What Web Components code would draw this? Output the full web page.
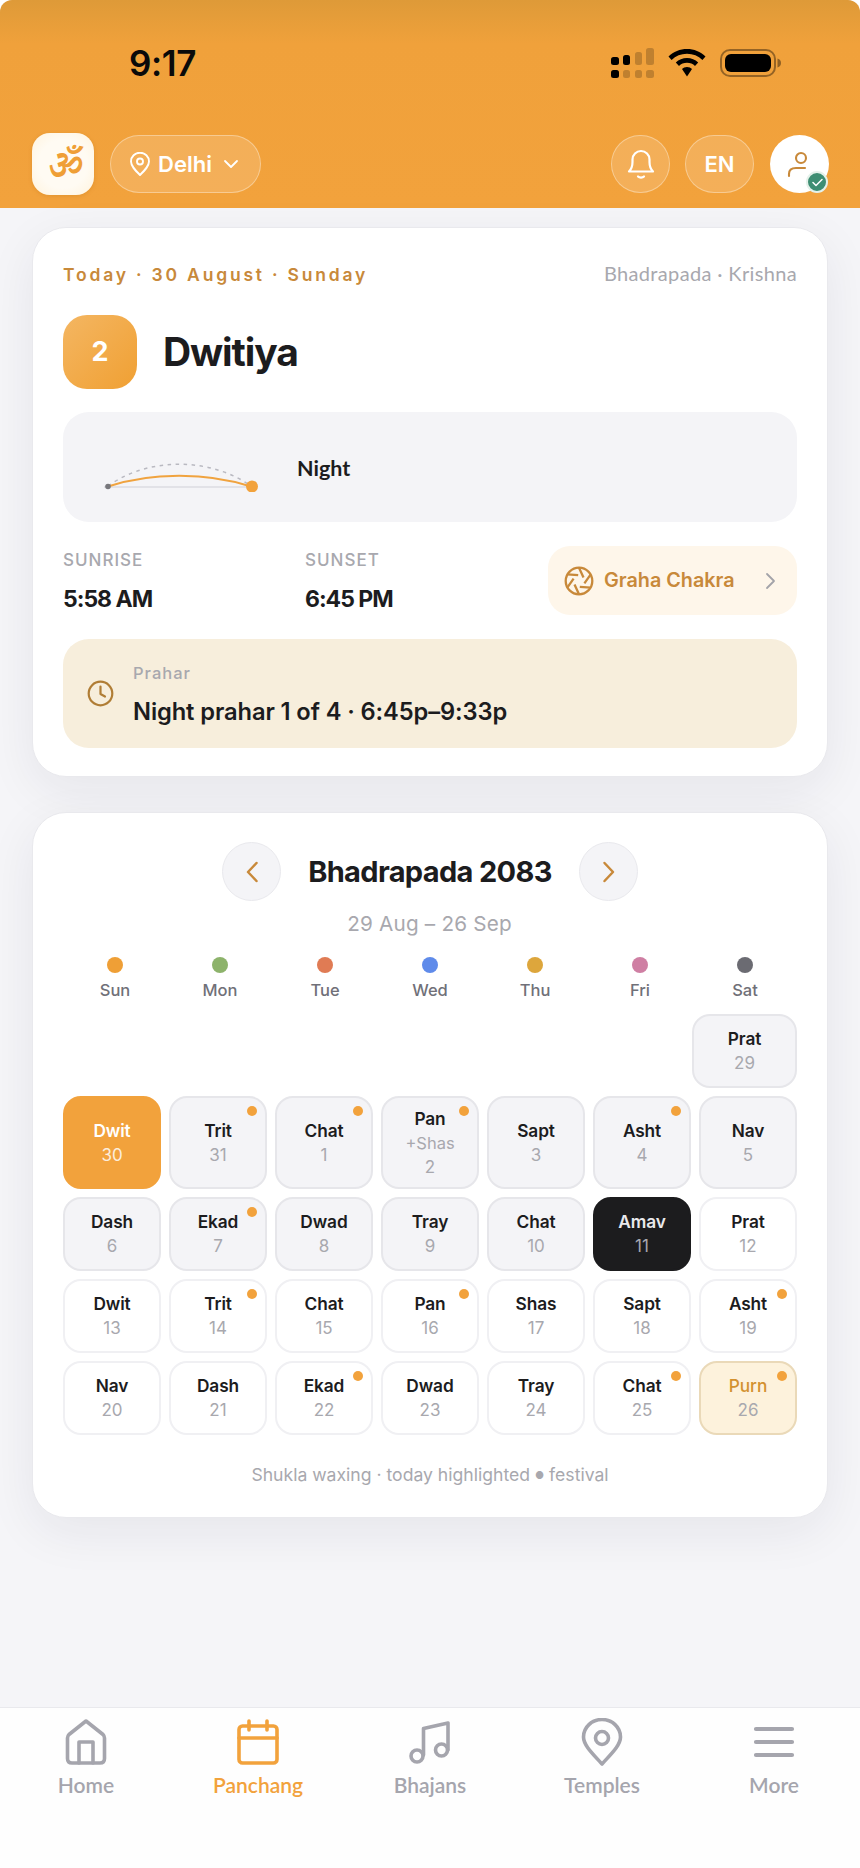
<!DOCTYPE html>
<html lang="en"><head><meta charset="utf-8"><title>Panchang</title>
<style>
html{background:#fff}
body{margin:0;font-family:Inter,"Noto Sans",sans-serif;color:#1c1c1e}
</style></head><body>
<app-shell>
  <top-header slot="top"></top-header>
  <tithi-card></tithi-card>
  <month-card></month-card>
  <bottom-nav slot="nav"></bottom-nav>
</app-shell>
<script>
const def=(name,html,init)=>customElements.define(name,class extends HTMLElement{
  constructor(){super();this.attachShadow({mode:'open'}).innerHTML=typeof html==='function'?html(this):html;}
  connectedCallback(){init&&init(this)}
});
const F='Inter,"Noto Sans",sans-serif';
const L='Lato,"Noto Sans",sans-serif';

def('app-shell',`<style>
:host{display:flex;flex-direction:column;height:1868px;overflow:hidden;background:#f5f5f8;border-radius:12px 12px 0 0}
main{flex:1;display:flex;flex-direction:column;gap:35px;padding:19px 32px 0;min-height:0}
</style><slot name="top"></slot><main><slot></slot></main><slot name="nav"></slot>`);

def('status-bar',`<style>
:host{display:flex;align-items:center;justify-content:space-between;height:133px;box-sizing:border-box;padding:0 79px 8px 129px}
.t{font:600 35px/1 ${F};color:#0a0a0a;letter-spacing:-.4px;position:relative;top:1px}
.r{display:flex;align-items:center;gap:14px}
svg{display:block}
</style>
<span class="t">9:17</span>
<span class="r">
<svg width="43" height="30" viewBox="0 0 43 30"><g fill="#000"><rect x="0" y="9" width="8" height="8" rx="2.500"/><rect x="0" y="22" width="8" height="8" rx="2.500"/><rect x="12" y="7" width="7" height="10" rx="2.500"/></g><g fill="#000" opacity=".2"><rect x="12" y="22" width="7" height="8" rx="2.500"/><rect x="24" y="4" width="7" height="13" rx="2.500"/><rect x="24" y="22" width="7" height="8" rx="2.500"/><rect x="35" y="0" width="8" height="17" rx="2.500"/><rect x="35" y="22" width="8" height="8" rx="2.500"/></g></svg>
<svg width="38" height="28" viewBox="0 0 38 28"><path d="M19 0C12 0 5.500 2.500.5 7.500L3.600 11C7.700 7 13 4.800 19 4.800S30.300 7 34.400 11L37.500 7.500C32.500 2.500 26 0 19 0Z"/><path d="M19 9C14.700 9 10.800 10.600 7.800 13.500L11 17C13 15 15.800 13.800 19 13.800S25 15 27 17L30.200 13.500C27.200 10.600 23.300 9 19 9Z"/><path d="M19 18C17 18 15.200 18.800 14 20L19 27.500 24 20C22.800 18.800 21 18 19 18Z"/></svg>
<svg width="61" height="28" viewBox="0 0 61 28"><rect x="1" y="1" width="54" height="26" rx="9" fill="none" stroke="#000" stroke-opacity=".38" stroke-width="2"/><rect x="5" y="5" width="46" height="18" rx="6"/><path d="M57.500 9.500C60 10 61 12 61 14S60 18 57.500 18.500Z" opacity=".4"/></svg>
</span>`);

def('glass-pill',`<style>
:host{display:inline-flex;align-items:center;justify-content:center;height:58px;box-sizing:border-box;border:1.500px solid rgba(255,255,255,.35);background:rgba(255,255,255,.15);border-radius:29px;color:#fff;font:600 22px/1 ${F}}
</style><slot></slot>`);

def('top-header',`<style>
:host{display:block;height:208px;flex:none;background:linear-gradient(#de9a38 0,#f0a13b 44px,#f2a23c 100%)}
.row{display:flex;align-items:center;padding:0 31px 0 32px;height:62px}
.logo{width:62px;height:62px;border-radius:18px;background:radial-gradient(circle,#fffbf3 55%,#fff3dd 100%);box-sizing:border-box;display:flex;align-items:center;justify-content:center;box-shadow:0 1px 4px rgba(160,90,0,.2)}
.logo span{font:700 38px/1 "Liberation Serif","Noto Serif Devanagari",serif;font-style:italic;color:#ef9f36}
.sp{flex:1}
.loc{width:151px;margin-left:16px;gap:7px;padding-right:3px}
.bell{width:59px;margin-right:15px}
.en{width:69px;margin-right:16px}
.av{width:59px;height:58px;border-radius:50%;background:#fff;position:relative;display:flex;align-items:center;justify-content:center}
.ok{position:absolute;right:1px;bottom:0;width:22px;height:22px;box-sizing:border-box;border-radius:50%;background:#3e8e73;border:2.500px solid #e4f1ea;display:flex;align-items:center;justify-content:center}
svg{display:block}
</style>
<status-bar></status-bar>
<div class="row">
  <div class="logo"><span>ॐ</span></div>
  <glass-pill class="loc"><svg width="22" height="24" viewBox="0 0 22 24" fill="none" stroke="#fff" stroke-width="1.900"><path d="M11 23C6 18 2 14 2 9.500A9 8.800 0 0 1 20 9.500C20 14 16 18 11 23Z" stroke-linejoin="round"/><circle cx="11" cy="9.500" r="3"/></svg><span>Delhi</span><svg width="16" height="10" viewBox="0 0 16 10" fill="none" stroke="#fff" stroke-width="1.800" stroke-linecap="round" stroke-linejoin="round" style="margin-left:4px"><path d="M2 2l6 6 6-6"/></svg></glass-pill>
  <span class="sp"></span>
  <glass-pill class="bell"><svg width="28" height="31" viewBox="0 0 28 31" fill="none" stroke="#fff" stroke-width="2.200" stroke-linecap="round" stroke-linejoin="round"><path d="M2 22.500C4.500 20 5.500 18 5.500 13V10.500A8.500 8.500 0 0 1 22.500 10.500V13C22.500 18 23.500 20 26 22.500Z"/><path d="M11 27.500C12.500 29 15.500 29 17 27.500"/></svg></glass-pill>
  <glass-pill class="en">EN</glass-pill>
  <div class="av"><svg width="26" height="27" viewBox="0 0 26 27" fill="none" stroke="#c8893a" stroke-width="2.100" stroke-linecap="round"><circle cx="14" cy="7" r="5"/><path d="M2 25V23C2 19 5 17 9 17H18"/></svg><span class="ok"><svg width="11" height="9" viewBox="0 0 11 9" fill="none" stroke="#fff" stroke-width="1.500" stroke-linecap="round" stroke-linejoin="round"><path d="M1 4.500l3 3 6-6"/></svg></span></div>
</div>`);

def('card-box',`<style>
:host{display:block;background:#fff;border:1px solid #e9e9ed;border-radius:34px;padding:30px;box-shadow:0 14px 50px rgba(30,30,60,.07);box-sizing:border-box}
</style><slot></slot>`);

def('tithi-card',`<style>
:host{display:block}
card-box{padding-top:30px;padding-bottom:28px}
.top{display:flex;justify-content:space-between;align-items:center;height:22px;margin-top:6px}
.date{font:600 17.500px/22px ${F};letter-spacing:2.800px;color:#c8893a}
.paksha{font:400 20px/22px ${L};color:#a8a8ae;letter-spacing:.35px;margin-bottom:5px}
.tithi{display:flex;align-items:center;gap:26px;margin-top:29px}
.num{width:74px;height:74px;border-radius:24px;background:linear-gradient(135deg,#f4b662,#f0a033);color:#fff;font:700 27px/74px ${F};text-align:center}
h1{margin:-2px 0 0;font:700 39px/1 ${F};letter-spacing:-1.100px;color:#1c1c1e}
.sky{height:110px;margin-top:23px;border-radius:26px;background:#f4f4f7;display:flex;align-items:flex-start;position:relative}
.sky svg{display:block;margin:40px 0 0 25px;flex:none}
.sky b{font:700 21.500px/1 ${L};margin:46px 0 0 25px;color:#1c1c1e}
.sun{display:flex;align-items:center;margin-top:24px;height:69px}
.st{width:242px}
.st small{display:block;font:500 17px/20px ${F};letter-spacing:1px;color:#a8a8ae}
.st strong{display:block;margin-top:17px;font:700 23px/24px ${F};letter-spacing:-1px;color:#1c1c1e}
.gc{width:249px;height:69px;box-sizing:border-box;margin-left:auto;border-radius:22px;background:#fef6ea;display:flex;align-items:center;padding:0 21px 0 16px;color:#c8893a;font:600 19.800px/1 ${F}}
.gc svg:first-child{margin-right:10px}
.gc svg:last-child{margin-left:auto}
.pr{margin-top:24px;height:109px;border-radius:26px;background:#f7eedc;display:flex;align-items:center;padding-left:24px;gap:19px}
.pr span{margin-top:2px}
.pr small{display:block;font:500 16.500px/20px ${F};letter-spacing:1px;color:#a8a8ae;margin-top:-2px}
.pr div{font:600 23.700px/26px ${F};letter-spacing:-.1px;color:#1c1c1e;margin-top:16px}
svg{display:block}
</style>
<card-box>
<div class="top"><span class="date">Today · 30 August · Sunday</span><span class="paksha">Bhadrapada · Krishna</span></div>
<div class="tithi"><div class="num">2</div><h1>Dwitiya</h1></div>
<div class="sky"><svg width="184" height="40" viewBox="0 0 184 40" fill="none"><path d="M16 35H162" stroke="#dcdce2" stroke-width="1.500"/><path d="M20 34C60 5 122 5 163 34" stroke="#b9b9c1" stroke-width="1.500" stroke-dasharray="3.500 4.500"/><path d="M20 34.500C62 20 120 20 163 34.500" stroke="#f0a33f" stroke-width="2"/><circle cx="20" cy="34.500" r="2.800" fill="#77777c"/><circle cx="164" cy="34.500" r="6" fill="#f2a23c"/></svg><b>Night</b></div>
<div class="sun">
  <div class="st"><small>SUNRISE</small><strong>5:58 AM</strong></div>
  <div class="st" style="width:auto"><small>SUNSET</small><strong>6:45 PM</strong></div>
  <div class="gc"><svg width="30" height="30" viewBox="0 0 30 30" fill="none" stroke="#c8893a" stroke-width="2.300" stroke-linejoin="round"><circle cx="15" cy="15" r="13.300"/><path d="M15 1.700L19.500 11.500M26.700 8.300L20.400 17.300M26.700 21.700L15.800 20.800M15 28.300L10.500 18.500M3.300 21.700L9.600 12.700M3.300 8.300L14.200 9.200"/></svg><span>Graha Chakra</span><svg width="11" height="18" viewBox="0 0 11 18" fill="none" stroke="#a3a3a9" stroke-width="1.800" stroke-linecap="round" stroke-linejoin="round"><path d="M2 2l7 7-7 7"/></svg></div>
</div>
<div class="pr"><svg width="27" height="27" viewBox="0 0 27 27" fill="none" stroke="#b07d35" stroke-width="2.200" stroke-linecap="round" stroke-linejoin="round"><circle cx="13.500" cy="13.500" r="11.800"/><path d="M13.500 6.500V14L18 16.500"/></svg><span><small>Prahar</small><div>Night prahar 1 of 4 · 6:45p–9:33p</div></span></div>
</card-box>`);

def('day-cell',h=>`<style>
:host{display:flex;flex-direction:column;align-items:center;justify-content:center;box-sizing:border-box;min-height:74px;padding:8.500px 0;border:2px solid #f0f0f3;border-radius:18px;background:#fff;position:relative;text-align:center}
:host([past]){background:#f4f4f7;border-color:#e6e6ea}
:host([wide]){margin-left:-7px}
:host([today]){background:#f2a23c;border-color:#f2a23c}
:host([amav]){background:#1c1c1e;border-color:#1c1c1e}
:host([purn]){background:#fdf2dc;border-color:#ead9b8}
b{font:600 17.300px/24px ${F};color:#1c1c1e;letter-spacing:-.1px}
span{font:400 17px/24px ${F};color:#a8a8ae}
i{font:400 16.500px/24px ${F};color:#a8a8ae}
:host([today]) b{color:#fff}:host([today]) span{color:#fff;opacity:.82}
:host([amav]) b{color:#e9e9ec}:host([amav]) span{color:#a8a8ae}
:host([purn]) b{color:#d3912f;font-weight:500}
em{position:absolute;top:8px;right:8px;width:10px;height:10px;border-radius:50%;background:#f2a23c}
</style><b><slot></slot></b><i></i><span></span><em hidden></em>`,h=>{
 const s=h.shadowRoot;s.querySelector('span').textContent=h.getAttribute('n')||'';
 const i=s.querySelector('i');if(h.hasAttribute('sub'))i.textContent=h.getAttribute('sub');else i.remove();
 if(h.hasAttribute('fest'))s.querySelector('em').hidden=false;else s.querySelector('em').remove();
});

def('round-btn',`<style>
:host{display:flex;align-items:center;justify-content:center;width:59px;height:59px;border-radius:50%;background:#f4f4f7;border:1px solid #e9e9ed;box-sizing:border-box;flex:none}
</style><slot></slot>`);

const rows=[
 [29,'Prat','past wide'],
 [30,'Dwit','today'],[31,'Trit','past fest'],[1,'Chat','past fest'],[2,'Pan','past fest',"+Shas"],[3,'Sapt','past'],[4,'Asht','past fest'],[5,'Nav','past'],
 [6,'Dash','past'],[7,'Ekad','past fest'],[8,'Dwad','past'],[9,'Tray','past'],[10,'Chat','past'],[11,'Amav','amav'],[12,'Prat',''],
 [13,'Dwit',''],[14,'Trit','fest'],[15,'Chat',''],[16,'Pan','fest'],[17,'Shas',''],[18,'Sapt',''],[19,'Asht','fest'],
 [20,'Nav',''],[21,'Dash',''],[22,'Ekad','fest'],[23,'Dwad',''],[24,'Tray',''],[25,'Chat','fest'],[26,'Purn','purn fest']
];
const cells='<span></span>'.repeat(6)+rows.map(([n,t,f,sub])=>`<day-cell n="${n}" ${f} ${sub?`sub="${sub}"`:''}>${t}</day-cell>`).join('');
const days=[['Sun','#ef9f36'],['Mon','#8db36b'],['Tue','#e07b54'],['Wed','#5f8bea'],['Thu','#dda63c'],['Fri','#cf7fa3'],['Sat','#6b6b72']];

def('month-card',`<style>
:host{display:block}
.head{display:flex;justify-content:center;align-items:center;gap:27px}
h2{margin:0;font:700 29px/1 ${F};letter-spacing:-.65px;color:#1c1c1e;width:244px;text-align:center;white-space:nowrap}
.sub{text-align:center;font:400 20.700px/26px ${F};color:#a8a8ae;letter-spacing:.2px;margin:10px 1px 0 0}
.days{display:grid;grid-template-columns:repeat(7,105px);margin:20.400px -.5px 0;justify-items:center}
.d{display:flex;flex-direction:column;align-items:center;gap:7px;font:500 16.500px/20px ${F};color:#707078}
.d i{width:16px;height:16px;border-radius:50%}
.grid{display:grid;grid-template-columns:repeat(7,1fr);gap:8px;margin-top:14px}
.foot{margin-top:29px;text-align:center;font:400 17.600px/22px ${F};color:#a8a8ae;padding-bottom:1px}
.foot small{font-size:10px;position:relative;top:-2px}
card-box{padding-top:29px;height:706px}
svg{display:block}
</style>
<card-box>
<div class="head"><round-btn><svg width="14" height="22" viewBox="0 0 14 22" fill="none" stroke="#c8893a" stroke-width="2.500" stroke-linecap="round" stroke-linejoin="round"><path d="M11.500 2L3 11l8.500 9"/></svg></round-btn><h2>Bhadrapada 2083</h2><round-btn><svg width="14" height="22" viewBox="0 0 14 22" fill="none" stroke="#c8893a" stroke-width="2.500" stroke-linecap="round" stroke-linejoin="round"><path d="M2.500 2L11 11l-8.500 9"/></svg></round-btn></div>
<div class="sub">29 Aug – 26 Sep</div>
<div class="days">${days.map(([d,c])=>`<div class="d"><i style="background:${c}"></i>${d}</div>`).join('')}</div>
<div class="grid">${cells}</div>
<div class="foot">Shukla waxing · today highlighted <small>●</small> festival</div>
</card-box>`);

def('nav-item',`<style>
:host{display:flex;flex-direction:column;align-items:center;flex:1;color:#a5a5ad;font:600 21px/24px ${L};padding-top:10.500px;gap:8px}
:host([on]){color:#f2a23c}
.i{height:46px;display:flex;align-items:center;justify-content:center}
</style><div class="i"><slot name="i"></slot></div><slot></slot>`);

def('bottom-nav',`<style>
:host{display:flex;height:161px;flex:none;background:#fefefe;border-top:1.500px solid #e9e9ed;box-sizing:border-box}
svg{display:block}
</style>
<nav-item><svg slot="i" width="42" height="46" viewBox="0 0 42 46" fill="none" stroke="#a5a5ad" stroke-width="3.600" stroke-linejoin="round" stroke-linecap="round"><path d="M2.500 19V39.500Q2.500 44 7 44H35Q39.500 44 39.500 39.500V19Q39.500 17 38 15.500L21 2 4 15.500Q2.500 17 2.500 19Z"/><path d="M14 44V23H28V44"/></svg>Home</nav-item>
<nav-item on><svg slot="i" width="42" height="46" viewBox="0 0 42 46" fill="none" stroke="#f2a23c" stroke-width="3.600" stroke-linecap="round" stroke-linejoin="round"><rect x="2" y="7" width="38" height="37" rx="3.500"/><path d="M2 19H40M12 2V11M30 2V11"/></svg>Panchang</nav-item>
<nav-item><svg slot="i" width="42" height="46" viewBox="0 0 42 46" fill="none" stroke="#a5a5ad" stroke-width="3.600" stroke-linecap="round" stroke-linejoin="round"><path d="M14.500 36V9.500L39 4V31"/><circle cx="8" cy="37" r="6"/><circle cx="32.500" cy="31" r="6"/></svg>Bhajans</nav-item>
<nav-item><svg slot="i" width="42" height="48" viewBox="0 0 42 48" fill="none" stroke="#a5a5ad" stroke-width="3.600" stroke-linejoin="round"><path d="M21 46C11 35 2.500 27 2.500 19A18.500 17.500 0 0 1 39.500 19C39.500 27 31 35 21 46Z"/><circle cx="21" cy="20" r="6.500"/></svg>Temples</nav-item>
<nav-item><svg slot="i" width="42" height="34" viewBox="0 0 42 34" fill="none" stroke="#a5a5ad" stroke-width="4.200" stroke-linecap="round"><path d="M3 4H39M3 17H39M3 30H39"/></svg>More</nav-item>`);
</script>
</body></html>
